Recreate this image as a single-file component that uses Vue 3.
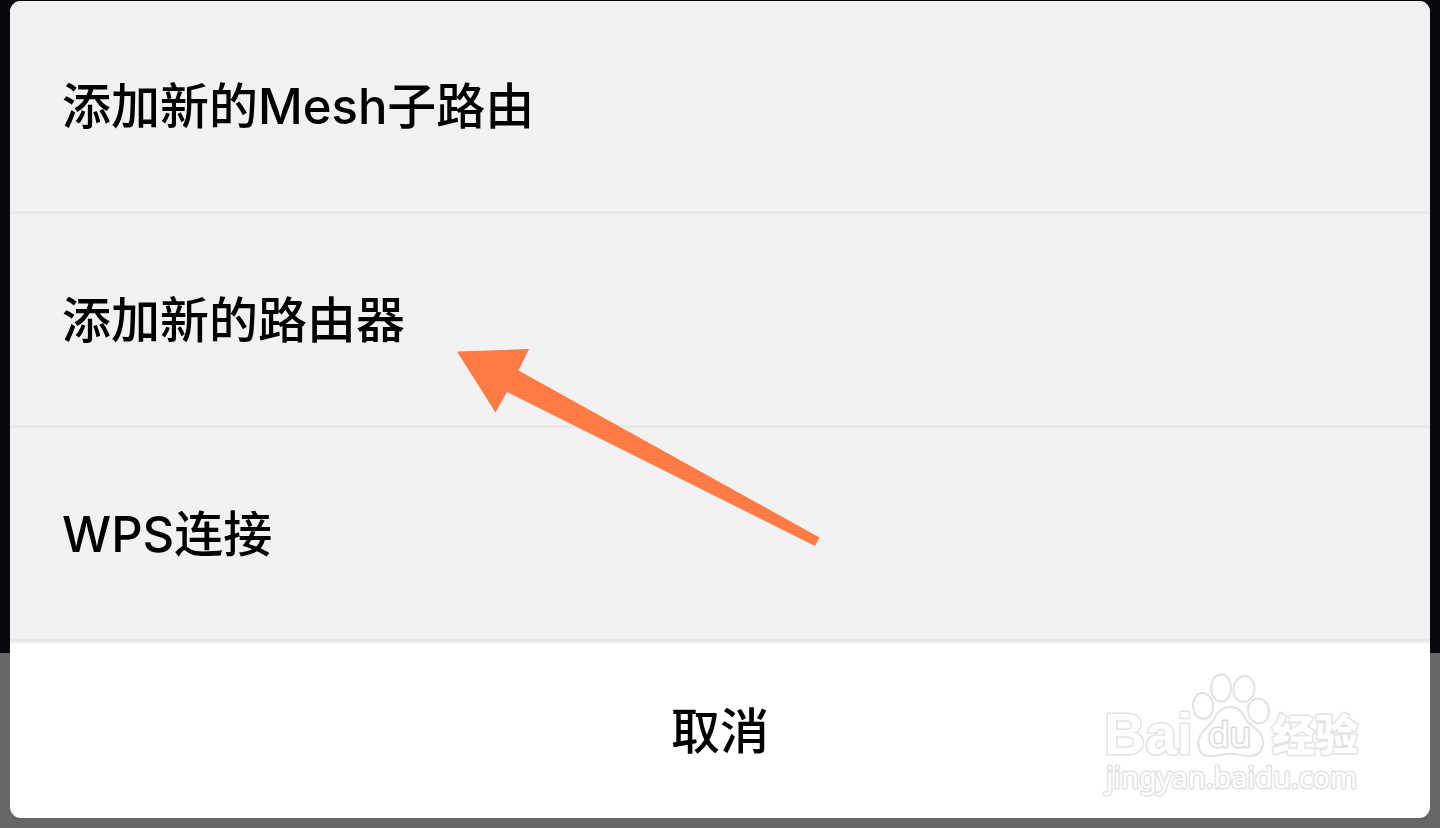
<script setup>
const options = ['添加新的Mesh子路由', '添加新的路由器', 'WPS连接']
</script>

<template>
  <main class="screen">
    <section class="sheet" aria-label="添加设备">
      <ul class="options">
        <li v-for="option in options" :key="option" class="row">
          <button type="button" class="option">{{ option }}</button>
        </li>
      </ul>
      <button type="button" class="cancel">取消</button>

      <svg class="arrow" viewBox="0 0 364 200" aria-hidden="true">
        <path d="M0 3.500L72 1L61.500 22.500L362.500 189.500L358 198L50 44L38.500 64.500Z" />
      </svg>

      <svg class="watermark" viewBox="0 0 290 150" role="img" aria-label="Baidu 经验">
        <g class="outline">
          <ellipse cx="113" cy="46" rx="10" ry="13" transform="rotate(-4 113 46)" />
          <ellipse cx="131" cy="28" rx="10" ry="13.500" />
          <ellipse cx="154" cy="29" rx="10.500" ry="13" transform="rotate(8 154 29)" />
          <ellipse cx="168.500" cy="51" rx="10.500" ry="12.500" transform="rotate(-8 168.500 51)" />
          <path d="M140 47C150 47 153 54 157 61C163 68 173 71 173 82C173 92 166 97 157 96C149 95 145 93 137 94C129 95 121 98 114 95C108 92 107 82 110 76C114 69 120 66 124 59C127 52 132 47 140 47Z" />
        </g>
        <text class="brand" x="14" y="94">Bai</text>
        <text class="brand-du" x="118" y="87">du</text>
        <text class="brand-cn" x="182" y="91">经验</text>
        <text class="domain" x="16" y="128">jingyan.baidu.com</text>
      </svg>
    </section>
  </main>
</template>

<style>
body {
  margin: 0;
}
</style>

<style scoped>
.screen {
  box-sizing: border-box;
  min-height: 100vh;
  padding: 1px 10px 10px;
  background: linear-gradient(to top, #676767 175px, #08090f 175px);
  font-family: Inter, "Noto Sans CJK SC", sans-serif;
}

.sheet {
  position: relative;
  overflow: hidden;
  border-radius: 11px;
  background: #fff;
}

.options {
  margin: 0;
  padding: 0;
  list-style: none;
  background: #f2f2f2;
}

.row {
  padding-bottom: 1px;
}

.option,
.cancel {
  display: block;
  box-sizing: border-box;
  width: 100%;
  margin: 0;
  border: 0;
  background: transparent;
  color: #000;
  font-family: inherit;
  font-size: 49px;
  font-weight: 500;
  line-height: 72px;
  cursor: pointer;
}

.option {
  padding: 70px 52px 68px;
  border-bottom: 3px solid #e9e9e9;
  text-align: left;
}

.cancel {
  padding: 53px 52px 50px;
  text-align: center;
}

.arrow {
  position: absolute;
  top: 347px;
  left: 447px;
  width: 364px;
  height: 200px;
  fill: #ff7b45;
  pointer-events: none;
}

.watermark {
  position: absolute;
  right: 50px;
  bottom: 8px;
  width: 290px;
  height: 150px;
  pointer-events: none;
}

.outline,
.watermark text {
  fill: #fff;
  stroke: #e2e2e2;
  stroke-width: 2px;
  stroke-linejoin: round;
}

.watermark text {
  stroke-width: 3px;
  paint-order: stroke;
}

.watermark .brand {
  font: 700 57px "Liberation Sans", sans-serif;
}

.watermark .brand-du {
  stroke: #d8d8d8;
  font: 400 35px "Noto Sans", sans-serif;
}

.watermark .brand-cn {
  font: 900 43px "Noto Sans CJK SC", sans-serif;
}

.watermark .domain {
  font: 400 29px "Noto Sans", sans-serif;
}
</style>
